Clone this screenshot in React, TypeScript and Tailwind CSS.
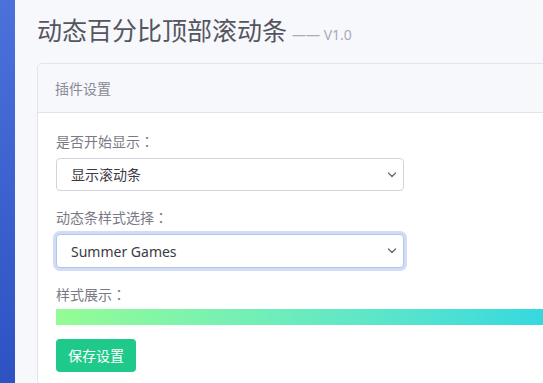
import React from 'react';

const font = { fontFamily: '"Noto Sans", "Noto Sans CJK SC", sans-serif' };
const colonFont = { fontFamily: '"Noto Sans CJK JP", "Noto Sans CJK SC", sans-serif' };

const Chevron = () => (
    <svg className="pointer-events-none absolute right-[7px] top-1/2 -translate-y-1/2" width="10" height="7" viewBox="0 0 10 7" fill="none">
        <path d="M1.5 1.5 L5 5 L8.5 1.5" stroke="#6b6b78" strokeWidth="1.4" strokeLinecap="round" strokeLinejoin="round" />
    </svg>
);

interface SelectProps {
    value: string;
    options: string[];
    focused?: boolean;
}

const Select = ({ value, options, focused }: SelectProps) => (
    <div className="relative w-[348px]">
        <select
            defaultValue={value}
            className={
                focused
                    ? 'h-[34px] w-full appearance-none rounded-[4px] border border-[#b4c4f0] bg-white pl-[14px] text-[14px] text-[#3a3a44] shadow-[0_0_0_3px_#d3dcf6] outline-none'
                    : 'h-[33px] w-full appearance-none rounded-[4px] border border-[#d5d2e0] bg-white pl-[14px] text-[14px] text-[#3a3a44] outline-none'
            }
        >
            {options.map((o) => (
                <option key={o}>{o}</option>
            ))}
        </select>
        <Chevron />
    </div>
);

const Label = ({ text, className = '' }: { text: string; className?: string }) => (
    <div className={`h-[20px] text-[14px] leading-[20px] text-[#7a7a86] ${className}`}>
        {text}
        <span style={colonFont}>：</span>
    </div>
);

export default function App() {
    return (
        <div className="flex h-[383px] w-[543px] overflow-hidden" style={font}>
            <div className="w-[15px] shrink-0 bg-gradient-to-b from-[#4c71db] to-[#2d52c2]" />
            <div className="flex-1 bg-[#f7f8fc] pl-[22px] pt-[12px]">
                <div className="flex items-baseline gap-[5px] h-[36px]">
                    <span className="text-[25px] leading-[36px] text-[#55555f]">动态百分比顶部滚动条</span>
                    <span className="text-[14px] text-[#aaaab4]">—— V1.0</span>
                </div>
                <div className="mt-[15px] w-[560px] rounded-[5px] border border-[#e3e3ec] bg-white">
                    <div className="flex h-[49px] items-center rounded-t-[5px] border-b border-[#e3e3ec] bg-[#f7f8fc] px-[17px] text-[14px] text-[#8a8a96]">
                        插件设置
                    </div>
                    <div className="flex flex-col px-[18px] pt-[18px] pb-[12px]">
                        <Label text="是否开始显示" />
                        <div className="mt-[7px]">
                            <Select value="显示滚动条" options={['显示滚动条', '隐藏滚动条']} />
                        </div>
                        <Label text="动态条样式选择" className="mt-[16px]" />
                        <div className="mt-[7px]">
                            <Select value="Summer Games" options={['Summer Games', 'Deep Blue', 'Sunset']} focused />
                        </div>
                        <Label text="样式展示" className="mt-[16px]" />
                        <div className="mt-[5px] h-[16px] w-full bg-gradient-to-r from-[#94fc94] to-[#28d6e4]" />
                        <div className="mt-[14px]">
                            <button className="h-[33px] rounded-[4px] bg-[#1ec98a] px-[12px] text-[14px] text-white">
                                保存设置
                            </button>
                        </div>
                    </div>
                </div>
            </div>
        </div>
    );
}
